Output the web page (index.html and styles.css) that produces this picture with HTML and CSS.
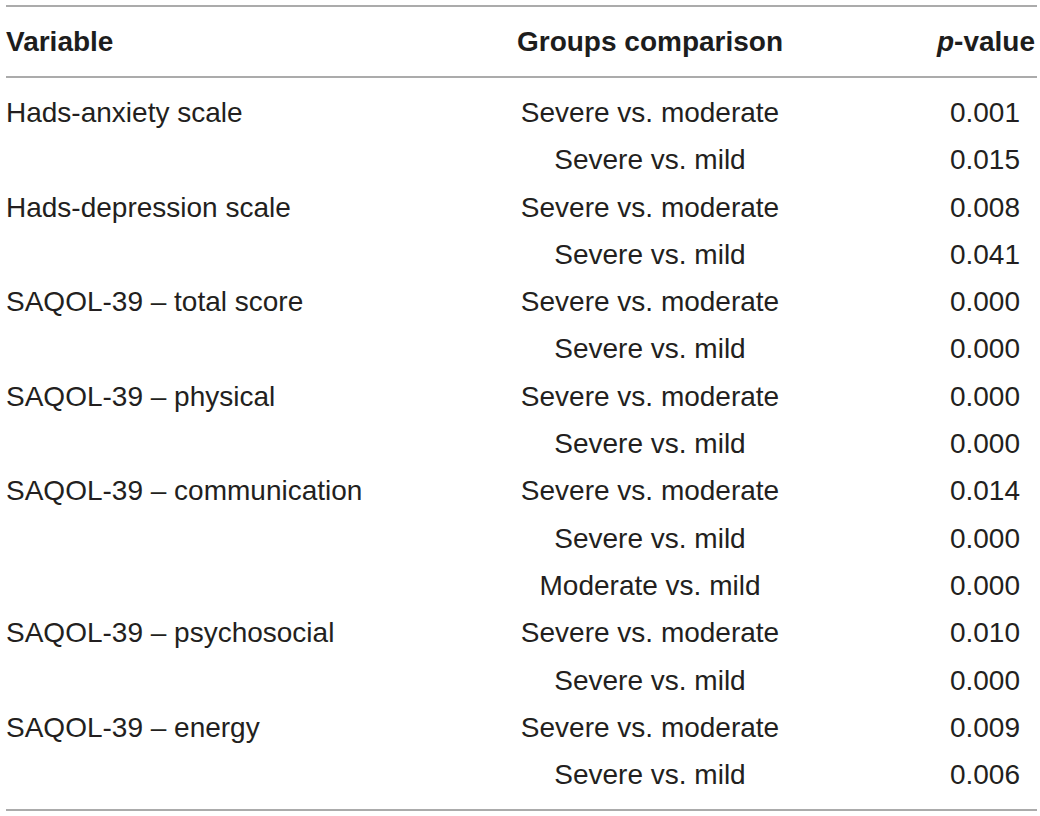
FILE: index.html
```html
<!DOCTYPE html>
<html lang="en">
<head>
<meta charset="utf-8">
<title>Groups comparison</title>
<link rel="stylesheet" href="styles.css">
</head>
<body>
<table class="stats">
  <thead>
    <tr>
      <th class="c-var">Variable</th>
      <th class="c-grp">Groups comparison</th>
      <th class="c-p"><i>p</i>-value</th>
    </tr>
  </thead>
  <tbody>
    <tr class="first"><td class="c-var">Hads-anxiety scale</td><td class="c-grp">Severe vs. moderate</td><td class="c-p">0.001</td></tr>
    <tr><td class="c-var"></td><td class="c-grp">Severe vs. mild</td><td class="c-p">0.015</td></tr>
    <tr><td class="c-var">Hads-depression scale</td><td class="c-grp">Severe vs. moderate</td><td class="c-p">0.008</td></tr>
    <tr><td class="c-var"></td><td class="c-grp">Severe vs. mild</td><td class="c-p">0.041</td></tr>
    <tr><td class="c-var">SAQOL-39 – total score</td><td class="c-grp">Severe vs. moderate</td><td class="c-p">0.000</td></tr>
    <tr><td class="c-var"></td><td class="c-grp">Severe vs. mild</td><td class="c-p">0.000</td></tr>
    <tr><td class="c-var">SAQOL-39 – physical</td><td class="c-grp">Severe vs. moderate</td><td class="c-p">0.000</td></tr>
    <tr><td class="c-var"></td><td class="c-grp">Severe vs. mild</td><td class="c-p">0.000</td></tr>
    <tr><td class="c-var">SAQOL-39 – communication</td><td class="c-grp">Severe vs. moderate</td><td class="c-p">0.014</td></tr>
    <tr><td class="c-var"></td><td class="c-grp">Severe vs. mild</td><td class="c-p">0.000</td></tr>
    <tr><td class="c-var"></td><td class="c-grp">Moderate vs. mild</td><td class="c-p">0.000</td></tr>
    <tr><td class="c-var">SAQOL-39 – psychosocial</td><td class="c-grp">Severe vs. moderate</td><td class="c-p">0.010</td></tr>
    <tr><td class="c-var"></td><td class="c-grp">Severe vs. mild</td><td class="c-p">0.000</td></tr>
    <tr><td class="c-var">SAQOL-39 – energy</td><td class="c-grp">Severe vs. moderate</td><td class="c-p">0.009</td></tr>
    <tr class="last"><td class="c-var"></td><td class="c-grp">Severe vs. mild</td><td class="c-p">0.006</td></tr>
  </tbody>
</table>
</body>
</html>
```

FILE: styles.css
```css
html, body {
  margin: 0;
  padding: 0;
  background: #ffffff;
}

body {
  padding: 5px 0 0 6px;
  font-family: "Liberation Sans", Arial, Helvetica, sans-serif;
  color: #231f20;
}

.stats {
  width: 1029px;
  border-collapse: collapse;
  table-layout: fixed;
  font-size: 28px;
  border-top: 2px solid #ababab;
  border-bottom: 2px solid #ababab;
}

.stats thead tr {
  border-bottom: 2px solid #ababab;
}

.stats th {
  height: 69px;
  line-height: 69px;
  padding: 0;
  font-weight: bold;
  color: #1d1d1d;
  white-space: nowrap;
}

.stats td {
  line-height: 47.3px;
  padding: 0;
  font-weight: normal;
  white-space: nowrap;
}

.stats .first td {
  padding-top: 11px;
}

.stats .last td {
  padding-bottom: 11px;
}

.c-var {
  width: 388px;
  text-align: left;
}

.c-grp {
  width: 512px;
  text-align: center;
}

.c-p {
  width: 129px;
  text-align: right;
}

.stats th.c-p {
  padding-right: 2px;
}

.stats td.c-p {
  padding-right: 17px;
}
```
